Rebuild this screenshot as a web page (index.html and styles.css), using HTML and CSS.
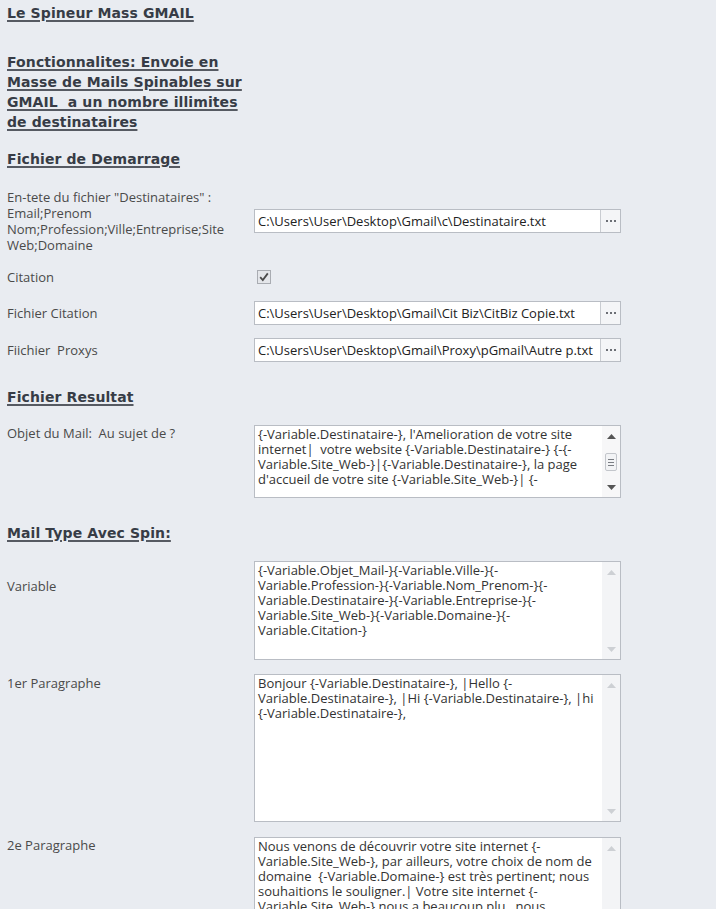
FILE: index.html
```html
<!DOCTYPE html>
<html lang="fr">
<head>
<meta charset="utf-8">
<title>Le Spineur Mass GMAIL</title>
<link rel="stylesheet" href="styles.css">
</head>
<body>
<div class="page">
  <h1 class="heading heading-title">Le Spineur Mass GMAIL</h1>
  <h2 class="heading heading-multi">Fonctionnalites: Envoie en
Masse de Mails Spinables sur
GMAIL  a un nombre illimites
de destinataires</h2>
  <h2 class="heading heading-start">Fichier de Demarrage</h2>

  <div class="row row-center row-dest">
    <div class="label label-multi">En-tete du fichier "Destinataires" :
Email;Prenom
Nom;Profession;Ville;Entreprise;Site
Web;Domaine</div>
    <div class="file-input">
      <span class="path">C:\Users\User\Desktop\Gmail\c\Destinataire.txt</span>
      <span class="browse"><i></i><i></i><i></i></span>
    </div>
  </div>

  <div class="row row-center row-citation">
    <div class="label">Citation</div>
    <div class="checkbox">
      <svg width="10" height="10" viewBox="0 0 10 10"><path d="M1.2 5.2 L3.8 8 L8.8 1.4" fill="none" stroke="#4a4a4a" stroke-width="1.8"/></svg>
    </div>
  </div>

  <div class="row row-center row-cit-file">
    <div class="label">Fichier Citation</div>
    <div class="file-input">
      <span class="path">C:\Users\User\Desktop\Gmail\Cit Biz\CitBiz Copie.txt</span>
      <span class="browse"><i></i><i></i><i></i></span>
    </div>
  </div>

  <div class="row row-center row-proxy">
    <div class="label">Fiichier  Proxys</div>
    <div class="file-input">
      <span class="path">C:\Users\User\Desktop\Gmail\Proxy\pGmail\Autre p.txt</span>
      <span class="browse"><i></i><i></i><i></i></span>
    </div>
  </div>

  <h2 class="heading heading-result">Fichier Resultat</h2>

  <div class="row row-top row-objet">
    <div class="label">Objet du Mail:  Au sujet de ?</div>
    <div class="memo memo-objet">
      <div class="memo-text">{-Variable.Destinataire-}, l'Amelioration de votre site
internet|  votre website {-Variable.Destinataire-} {-{-
Variable.Site_Web-}|{-Variable.Destinataire-}, la page
d'accueil de votre site {-Variable.Site_Web-}| {-</div>
      <div class="scrollbar">
        <svg class="arrow" width="9" height="5" viewBox="0 0 9 5"><path d="M0 5 L4.5 0 L9 5Z" fill="#555"/></svg>
        <span class="thumb"><i></i><i></i><i></i></span>
        <svg class="arrow" width="9" height="5" viewBox="0 0 9 5"><path d="M0 0 L4.5 5 L9 0Z" fill="#555"/></svg>
      </div>
    </div>
  </div>

  <h2 class="heading heading-spin">Mail Type Avec Spin:</h2>

  <div class="row row-top row-variable">
    <div class="label label-variable">Variable</div>
    <div class="memo memo-variable">
      <div class="memo-text">{-Variable.Objet_Mail-}{-Variable.Ville-}{-
Variable.Profession-}{-Variable.Nom_Prenom-}{-
Variable.Destinataire-}{-Variable.Entreprise-}{-
Variable.Site_Web-}{-Variable.Domaine-}{-
Variable.Citation-}</div>
      <div class="scrollbar scrollbar-off">
        <svg class="arrow" width="9" height="5" viewBox="0 0 9 5"><path d="M0 5 L4.5 0 L9 5Z" fill="#cdd0d4"/></svg>
        <svg class="arrow" width="9" height="5" viewBox="0 0 9 5"><path d="M0 0 L4.5 5 L9 0Z" fill="#cdd0d4"/></svg>
      </div>
    </div>
  </div>

  <div class="row row-top row-p1">
    <div class="label label-p1">1er Paragraphe</div>
    <div class="memo memo-p1">
      <div class="memo-text">Bonjour {-Variable.Destinataire-}, |Hello {-
Variable.Destinataire-}, |Hi {-Variable.Destinataire-}, |hi
{-Variable.Destinataire-},</div>
      <div class="scrollbar scrollbar-off">
        <svg class="arrow" width="9" height="5" viewBox="0 0 9 5"><path d="M0 5 L4.5 0 L9 5Z" fill="#cdd0d4"/></svg>
        <svg class="arrow" width="9" height="5" viewBox="0 0 9 5"><path d="M0 0 L4.5 5 L9 0Z" fill="#cdd0d4"/></svg>
      </div>
    </div>
  </div>

  <div class="row row-top row-p2">
    <div class="label">2e Paragraphe</div>
    <div class="memo memo-p2">
      <div class="memo-text">Nous venons de découvrir votre site internet {-
Variable.Site_Web-}, par ailleurs, votre choix de nom de
domaine  {-Variable.Domaine-} est très pertinent; nous
souhaitions le souligner.| Votre site internet {-
Variable.Site_Web-} nous a beaucoup plu , nous</div>
      <div class="scrollbar scrollbar-off">
        <svg class="arrow" width="9" height="5" viewBox="0 0 9 5"><path d="M0 5 L4.5 0 L9 5Z" fill="#cdd0d4"/></svg>
        <svg class="arrow" width="9" height="5" viewBox="0 0 9 5"><path d="M0 0 L4.5 5 L9 0Z" fill="#cdd0d4"/></svg>
      </div>
    </div>
  </div>
</div>
</body>
</html>
```

FILE: styles.css
```css
html, body {
  margin: 0;
  padding: 0;
  background: #e9ecf1;
  overflow: hidden;
}

.page {
  padding: 0 0 0 7px;
  height: 909px;
  overflow: hidden;
  font-family: "Open Sans", "Noto Sans", sans-serif;
  font-size: 13px;
  color: #4a4a4a;
}

.heading {
  margin: 0;
  font-family: "DejaVu Sans", Verdana, sans-serif;
  font-weight: bold;
  font-size: 14px;
  line-height: 20px;
  color: #373c46;
  text-decoration: underline;
  text-decoration-thickness: 2px;
  text-underline-offset: 2px;
  text-decoration-color: #565a62;
  white-space: pre;
  letter-spacing: 0.1px;
}

.heading-title { margin-top: 3px; }
.heading-multi { margin-top: 29px; }
.heading-start { margin-top: 17px; }
.heading-result { margin-top: 25px; }
.heading-spin { margin-top: 25px; }

.row {
  display: grid;
  grid-template-columns: 247px 367px;
}

.row-center { align-items: center; }
.row-top { align-items: start; }

.row-dest { margin-top: 20px; }
.row-citation { margin-top: 12px; height: 24px; }
.row-cit-file { margin-top: 12px; }
.row-proxy { margin-top: 13px; }
.row-objet { margin-top: 18px; }
.row-variable { margin-top: 18px; }
.row-p1 { margin-top: 14px; }
.row-p2 { margin-top: 15px; }

.label {
  line-height: 16px;
  white-space: pre;
}

.label-multi { line-height: 16px; }
.label-variable { padding-top: 17px; }
.label-p1 { padding-top: 1px; }

.file-input {
  display: flex;
  height: 24px;
  box-sizing: border-box;
  border: 1px solid #b9bdc4;
  background: #ffffff;
}

.path {
  flex: 1;
  padding-left: 3px;
  line-height: 22px;
  color: #222222;
  white-space: pre;
  overflow: hidden;
}

.browse {
  width: 19px;
  border-left: 1px solid #c9ccd1;
  background: #f4f5f7;
  display: flex;
  align-items: center;
  justify-content: center;
  gap: 2px;
}

.browse i {
  width: 2px;
  height: 2px;
  background: #6c6f75;
}

.checkbox {
  width: 14px;
  height: 14px;
  margin-left: 3px;
  box-sizing: border-box;
  border: 1px solid #a9acb2;
  background: #e4e6ea;
  display: flex;
  align-items: center;
  justify-content: center;
}

.memo {
  display: flex;
  box-sizing: border-box;
  border: 1px solid #b9bdc4;
  background: #ffffff;
  overflow: hidden;
}

.memo-objet { height: 73px; }
.memo-variable { height: 99px; }
.memo-p1 { height: 148px; }
.memo-p2 { height: 120px; }

.memo-text {
  flex: 1;
  padding: 1px 0 0 3px;
  line-height: 15px;
  color: #333333;
  white-space: pre;
  overflow: hidden;
}

.scrollbar {
  width: 18px;
  flex: none;
  background: #f7f7f8;
  display: flex;
  flex-direction: column;
  align-items: center;
  justify-content: space-between;
  padding: 8px 0 7px;
  box-sizing: border-box;
}

.scrollbar-off {
  background: #f3f4f6;
}

.arrow { display: block; }

.thumb {
  width: 12px;
  height: 18px;
  box-sizing: border-box;
  border: 1px solid #c3c6cb;
  border-radius: 2px;
  background: #f2f3f5;
  display: flex;
  flex-direction: column;
  align-items: center;
  justify-content: center;
  gap: 2px;
}

.thumb i {
  width: 6px;
  height: 1px;
  background: #7a7d83;
}
```
